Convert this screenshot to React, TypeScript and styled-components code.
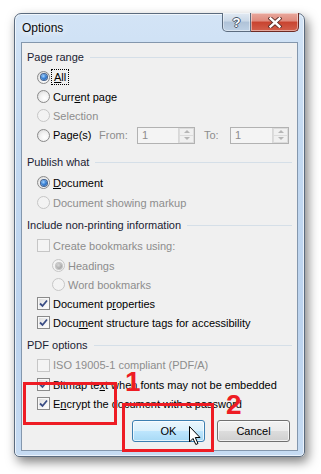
import React from "react";
import styled, { createGlobalStyle } from "styled-components";

const GlobalStyle = createGlobalStyle`
  html, body {
    margin: 0;
    padding: 0;
    background: #ffffff;
  }
  body {
    font-family: "Liberation Sans", Arial, sans-serif;
    font-size: 11px;
    color: #000;
  }
`;

const Page = styled.div`
  position: relative;
  width: 321px;
  height: 474px;
  overflow: hidden;
  box-sizing: border-box;
  padding: 13px 0 0 14px;
`;

const Window = styled.div`
  width: 291px;
  height: 444px;
  box-sizing: border-box;
  border: 1px solid #5b6b7e;
  border-radius: 7px 7px 5px 5px;
  background: linear-gradient(180deg, #d3e4f6 0%, #c3d9f1 30%, #bcd3ee 70%, #c6dbf2 100%);
  box-shadow: inset 0 0 0 1px rgba(255, 255, 255, 0.65), 3px 5px 11px rgba(0, 0, 0, 0.5);
  padding: 0 6px 5px 6px;
  display: flex;
  flex-direction: column;
`;

const TitleBar = styled.div`
  height: 28px;
  display: flex;
  justify-content: space-between;
  align-items: flex-start;
`;

const Title = styled.div`
  margin: 7px 0 0 1px;
  font-size: 12px;
  line-height: 14px;
  color: #0b0b0b;
  text-shadow: 0 0 6px #ffffff, 0 0 10px #ffffff;
`;

const CaptionButtons = styled.div`
  display: flex;
  margin-right: -1px;
  margin-top: -1px;
`;

const CaptionButton = styled.div<{ $close?: boolean }>`
  width: ${(p) => (p.$close ? "48px" : "29px")};
  height: 19px;
  box-sizing: border-box;
  border: 1px solid ${(p) => (p.$close ? "#6d2a24" : "#5c6c7f")};
  border-top: none;
  ${(p) => (p.$close ? "border-left: none;" : "")}
  border-radius: ${(p) => (p.$close ? "0 0 5px 0" : "0 0 0 5px")};
  background: ${(p) =>
    p.$close
      ? "linear-gradient(180deg, #e9a99e 0%, #df8a7c 45%, #c8432f 50%, #d2604c 100%)"
      : "linear-gradient(180deg, #e2eaf3 0%, #cad8e7 45%, #b0c3d8 50%, #bed1e5 100%)"};
  box-shadow: inset 0 0 0 1px rgba(255, 255, 255, 0.45);
  display: flex;
  align-items: center;
  justify-content: center;
`;

const HelpGlyph = styled.span`
  font-family: "Liberation Sans", Arial, sans-serif;
  font-weight: bold;
  font-size: 13px;
  line-height: 13px;
  color: #ffffff;
  text-shadow: -1px 0 #46576b, 1px 0 #46576b, 0 -1px #46576b, 0 1px #46576b;
`;

const Client = styled.div`
  height: 409px;
  box-sizing: border-box;
  border: 1px solid #8497ad;
  background: #f0f0f0;
  padding: 4px 5px 0 5px;
  display: flex;
  flex-direction: column;
`;

const Heading = styled.div<{ $gap?: number }>`
  height: 20px;
  margin-top: ${(p) => p.$gap ?? 0}px;
  display: flex;
  align-items: center;
  gap: 6px;
  color: #1a2233;
  white-space: nowrap;

  &::after {
    content: "";
    flex: 1;
    height: 1px;
    background: #d5dfe8;
  }
`;

const Row = styled.div<{ $h?: number; $indent?: number }>`
  height: ${(p) => p.$h ?? 19}px;
  padding-left: ${(p) => p.$indent ?? 10}px;
  display: flex;
  align-items: center;
  white-space: nowrap;
`;

const Label = styled.span<{ $disabled?: boolean; $focus?: boolean; $w?: number }>`
  margin-left: 3px;
  color: ${(p) => (p.$disabled ? "#8d8d8d" : "#000")};
  ${(p) => (p.$w ? `width: ${p.$w}px; flex: none;` : "")}
  ${(p) => (p.$focus ? "outline: 1px dotted #000; outline-offset: 1px; padding: 0 1px;" : "")}
`;

const FieldLabel = styled.span<{ $w: number; $before?: number }>`
  width: ${(p) => p.$w}px;
  margin-left: ${(p) => p.$before ?? 0}px;
  flex: none;
  color: #8d8d8d;
`;

const RadioBox = styled.span<{ $checked?: boolean; $disabled?: boolean }>`
  width: 13px;
  height: 13px;
  flex: none;
  box-sizing: border-box;
  border-radius: 50%;
  border: 1px solid ${(p) => (p.$disabled ? "#c6c6c6" : "#8a8a8a")};
  background: ${(p) =>
    p.$disabled
      ? "#f3f3f3"
      : "radial-gradient(circle at 60% 65%, #ffffff 0%, #f2f2f2 45%, #d4d4d4 100%)"};
  display: flex;
  align-items: center;
  justify-content: center;

  &::after {
    content: "";
    display: ${(p) => (p.$checked ? "block" : "none")};
    width: 6px;
    height: 6px;
    border-radius: 50%;
    background: ${(p) =>
      p.$disabled
        ? "radial-gradient(circle at 40% 35%, #d8d8d8 0%, #a4a4a4 70%, #8c8c8c 100%)"
        : "radial-gradient(circle at 40% 35%, #a9d6ff 0%, #3d84d6 45%, #174f9c 100%)"};
    box-shadow: ${(p) => (p.$disabled ? "0 0 0 1px #c4c4c4" : "0 0 0 1px #44638f")};
  }
`;

const CheckBox = styled.span<{ $disabled?: boolean }>`
  width: 13px;
  height: 13px;
  flex: none;
  box-sizing: border-box;
  border: 1px solid ${(p) => (p.$disabled ? "#c6c6c6" : "#8a8a8a")};
  background: ${(p) =>
    p.$disabled ? "#f4f4f4" : "linear-gradient(135deg, #d9d9d9 0%, #f4f4f4 60%, #ffffff 100%)"};
  box-shadow: inset 0 0 0 1px ${(p) => (p.$disabled ? "#f4f4f4" : "#f8f8f8")};
  display: flex;
  align-items: center;
  justify-content: center;
`;

const SpinBox = styled.div<{ $w: number }>`
  width: ${(p) => p.$w}px;
  height: 17px;
  flex: none;
  box-sizing: border-box;
  border: 1px solid #b2b2b2;
  background: #f4f4f4;
  display: flex;
`;

const SpinValue = styled.span`
  flex: 1;
  padding-left: 4px;
  line-height: 15px;
  color: #8d8d8d;
`;

const SpinArrows = styled.div`
  width: 15px;
  display: flex;
  flex-direction: column;
  border-left: 1px solid #d8d8d8;
`;

const SpinHalf = styled.div<{ $down?: boolean }>`
  flex: 1;
  display: flex;
  align-items: center;
  justify-content: center;
  background: #f0f0f0;
  border: 1px solid #dcdcdc;
  ${(p) => (p.$down ? "border-top: none;" : "")}

  &::after {
    content: "";
    width: 0;
    height: 0;
    border-left: 3px solid transparent;
    border-right: 3px solid transparent;
    ${(p) => (p.$down ? "border-top: 3px solid #b6b6b6;" : "border-bottom: 3px solid #b6b6b6;")}
  }
`;

const ButtonRow = styled.div`
  margin-top: 7px;
  padding-right: 2px;
  display: flex;
  justify-content: flex-end;
  gap: 12px;
`;

const DialogButton = styled.div<{ $default?: boolean }>`
  width: 73px;
  height: 22px;
  box-sizing: border-box;
  border-radius: 3px;
  border: 1px solid ${(p) => (p.$default ? "#3c7fb1" : "#707070")};
  background: ${(p) =>
    p.$default
      ? "linear-gradient(180deg, #eaf6fd 0%, #d9f0fc 50%, #bee6fd 50%, #a7d9f5 100%)"
      : "linear-gradient(180deg, #f2f2f2 0%, #ebebeb 50%, #dddddd 50%, #cfcfcf 100%)"};
  box-shadow: inset 0 0 0 1px rgba(255, 255, 255, 0.7);
  display: flex;
  align-items: center;
  justify-content: center;
  color: #000;
`;

const Marker = styled.div<{ $x: number; $y: number; $w: number; $h: number }>`
  position: absolute;
  left: ${(p) => p.$x}px;
  top: ${(p) => p.$y}px;
  width: ${(p) => p.$w}px;
  height: ${(p) => p.$h}px;
  box-sizing: border-box;
  border: 3px solid #ee1c24;
`;

const Step = styled.span<{ $x: number; $y: number }>`
  position: absolute;
  left: ${(p) => p.$x}px;
  top: ${(p) => p.$y}px;
  font-family: "Liberation Sans", Arial, sans-serif;
  font-weight: bold;
  font-size: 28px;
  line-height: 28px;
  color: #ee1c24;
`;

const Cursor = styled.svg`
  position: absolute;
  left: 188px;
  top: 425px;
`;

const Check = ({ disabled }: { disabled?: boolean }) => (
  <svg width="9" height="9" viewBox="0 0 9 9">
    <path
      d="M1 4.5 L3.5 7 L8 1.5"
      fill="none"
      stroke={disabled ? "#b0b0b0" : "#3a4d85"}
      strokeWidth="1.8"
    />
  </svg>
);

const Radio = ({
  label,
  checked,
  disabled,
  focus,
}: {
  label: React.ReactNode;
  checked?: boolean;
  disabled?: boolean;
  focus?: boolean;
}) => (
  <>
    <RadioBox $checked={checked} $disabled={disabled} />
    <Label $disabled={disabled} $focus={focus}>
      {label}
    </Label>
  </>
);

const Option = ({
  label,
  checked,
  disabled,
}: {
  label: React.ReactNode;
  checked?: boolean;
  disabled?: boolean;
}) => (
  <>
    <CheckBox $disabled={disabled}>{checked && <Check disabled={disabled} />}</CheckBox>
    <Label $disabled={disabled}>{label}</Label>
  </>
);

const Spinner = ({ w }: { w: number }) => (
  <SpinBox $w={w}>
    <SpinValue>1</SpinValue>
    <SpinArrows>
      <SpinHalf />
      <SpinHalf $down />
    </SpinArrows>
  </SpinBox>
);

export default function App() {
  return (
    <Page>
      <GlobalStyle />
      <Window>
        <TitleBar>
          <Title>Options</Title>
          <CaptionButtons>
            <CaptionButton>
              <HelpGlyph>?</HelpGlyph>
            </CaptionButton>
            <CaptionButton $close>
              <svg width="14" height="11" viewBox="0 0 14 11">
                <path d="M2.5 1.5 L11.5 9.5 M11.5 1.5 L2.5 9.5" stroke="#5a2a25" strokeWidth="4.2" strokeLinecap="square" />
                <path d="M2.5 1.5 L11.5 9.5 M11.5 1.5 L2.5 9.5" stroke="#ffffff" strokeWidth="2.4" strokeLinecap="square" />
              </svg>
            </CaptionButton>
          </CaptionButtons>
        </TitleBar>

        <Client>
          <Heading>Page range</Heading>
          <Row $h={20}>
            <Radio label={<><u>A</u>ll</>} checked focus />
          </Row>
          <Row>
            <Radio label={<>Curr<u>e</u>nt page</>} />
          </Row>
          <Row>
            <Radio label="Selection" disabled />
          </Row>
          <Row $h={20}>
            <RadioBox />
            <Label $w={46}>Page(s)</Label>
            <FieldLabel $w={38}>From:</FieldLabel>
            <Spinner w={58} />
            <FieldLabel $w={26} $before={9}>To:</FieldLabel>
            <Spinner w={59} />
          </Row>

          <Heading $gap={7}>Publish what</Heading>
          <Row $h={21}>
            <Radio label={<><u>D</u>ocument</>} checked />
          </Row>
          <Row>
            <Radio label="Document showing markup" disabled />
          </Row>

          <Heading $gap={3}>Include non-printing information</Heading>
          <Row $h={21}>
            <Option label="Create bookmarks using:" disabled />
          </Row>
          <Row $indent={25}>
            <Radio label="Headings" checked disabled />
          </Row>
          <Row $indent={25}>
            <Radio label="Word bookmarks" disabled />
          </Row>
          <Row>
            <Option label={<>Document p<u>r</u>operties</>} checked />
          </Row>
          <Row>
            <Option label={<>Docu<u>m</u>ent structure tags for accessibility</>} checked />
          </Row>

          <Heading $gap={3}>PDF options</Heading>
          <Row $h={20}>
            <Option label="ISO 19005-1 compliant (PDF/A)" disabled />
          </Row>
          <Row>
            <Option label={<>Bitmap te<u>x</u>t when fonts may not be embedded</>} checked />
          </Row>
          <Row>
            <Option label={<>E<u>n</u>crypt the document with a password</>} checked />
          </Row>

          <ButtonRow>
            <DialogButton $default>OK</DialogButton>
            <DialogButton>Cancel</DialogButton>
          </ButtonRow>
        </Client>
      </Window>

      <Marker $x={23} $y={382} $w={94} $h={43} />
      <Marker $x={122} $y={403} $w={92} $h={49} />
      <Step $x={125} $y={368}>1</Step>
      <Step $x={226} $y={391}>2</Step>

      <Cursor width="13" height="21" viewBox="0 0 13 21">
        <path
          d="M1.5 1.5 L1.5 17 L5 13.5 L7.8 19.5 L10 18.5 L7.3 12.5 L12 12.5 Z"
          fill="#ffffff"
          stroke="#000000"
          strokeWidth="1"
          strokeLinejoin="miter"
        />
      </Cursor>
    </Page>
  );
}
